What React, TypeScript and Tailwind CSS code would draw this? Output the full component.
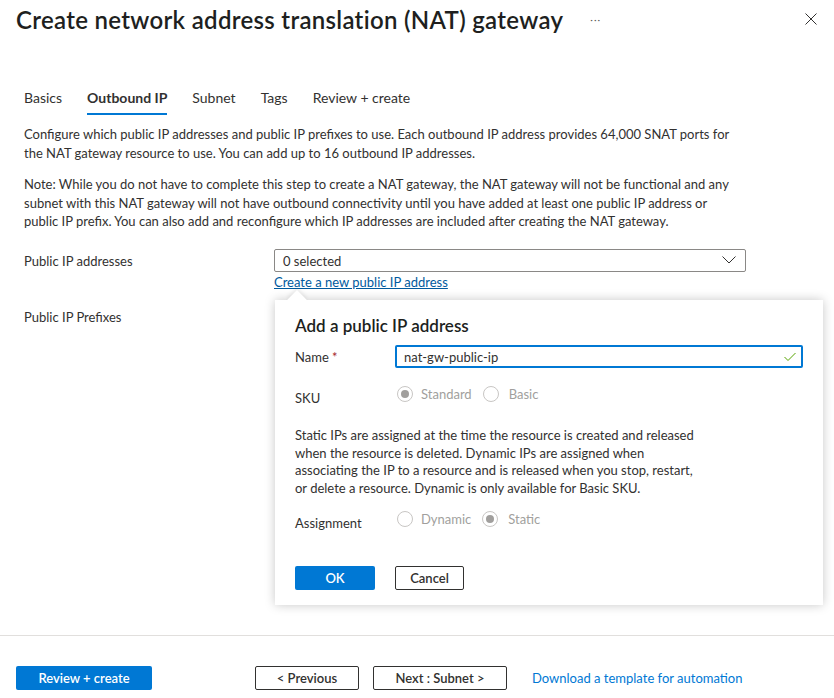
import React from "react";

const Radio = ({ checked }: { checked?: boolean }) => (
  <span className="w-[16px] h-[16px] rounded-full border border-[#c8c6c4] flex items-center justify-center bg-white">
    {checked && <span className="w-[8px] h-[8px] rounded-full bg-[#a19f9d]" />}
  </span>
);

export default function App() {
  return (
    <div className="w-[834px] h-[698px] bg-white relative flex flex-col font-['Lato','Liberation_Sans',sans-serif] text-[#323130] overflow-hidden">
      {/* Header */}
      <div className="flex items-center h-[40px] pl-4 pr-[16px]">
        <h1 className="text-[24px] font-semibold leading-[32px] text-[#201f1e] tracking-[0.3px]">
          Create network address translation (NAT) gateway
        </h1>
        <span className="ml-[27px] text-[10px] text-[#605e5c] tracking-[1px] mt-[-2px]">···</span>
        <div className="flex-1" />
        <svg width="12" height="12" viewBox="0 0 12 12" className="mr-[1px] mt-[-3px]">
          <path d="M0.5 0.5 L11.5 11.5 M11.5 0.5 L0.5 11.5" stroke="#323130" strokeWidth="1" />
        </svg>
      </div>

      {/* Tabs */}
      <div className="flex mt-[48px] pl-[11.5px] text-[14px] leading-[20px]">
        {["Basics", "Outbound IP", "Subnet", "Tags", "Review + create"].map((t) => (
          <div key={t} className="px-[12.5px] flex flex-col">
            <span className={t === "Outbound IP" ? "font-bold text-[#323130]" : "text-[#323130]"}>{t}</span>
            <span className={t === "Outbound IP" ? "h-[2px] mt-[5px] bg-[#0078d4]" : "h-[2px] mt-[5px]"} />
          </div>
        ))}
      </div>

      {/* Description */}
      <div className="px-6 mt-[10px] text-[13px] leading-[19px] whitespace-nowrap">
        <p>
          Configure which public IP addresses and public IP prefixes to use. Each outbound IP address provides 64,000 SNAT ports for
          <br />
          the NAT gateway resource to use. You can add up to 16 outbound IP addresses.
        </p>
        <p className="mt-[12px] leading-[18.5px]">
          Note: While you do not have to complete this step to create a NAT gateway, the NAT gateway will not be functional and any
          <br />
          subnet with this NAT gateway will not have outbound connectivity until you have added at least one public IP address or
          <br />
          public IP prefix. You can also add and reconfigure which IP addresses are included after creating the NAT gateway.
        </p>
      </div>

      {/* Form */}
      <div className="px-6 mt-[18px] text-[13px]">
        <div className="flex">
          <div className="w-[250px] pt-[3px] leading-[18px]">Public IP addresses</div>
          <div className="flex flex-col w-[472px]">
            <div className="h-[23px] border border-[#8a8886] rounded-[2px] flex items-center px-[8px] justify-between">
              <span className="leading-[18px] mt-[1px]">0 selected</span>
              <svg width="14" height="8" viewBox="0 0 14 8" className="mr-[1px]">
                <path d="M0.5 0.5 L7 7 L13.5 0.5" fill="none" stroke="#323130" strokeWidth="1" />
              </svg>
            </div>
            <a className="text-[#005a9e] underline leading-[18px] mt-[1px] w-fit">Create a new public IP address</a>
          </div>
        </div>
        <div className="mt-[17px] leading-[18px]">Public IP Prefixes</div>
      </div>

      <div className="flex-1" />

      {/* Footer */}
      <div className="border-t border-[#e1dfdd] h-[63px] flex items-start px-4 pt-[30px] text-[13px]">
        <button className="h-[24px] w-[136px] bg-[#0078d4] text-white font-semibold rounded-[2px] leading-[18px]">Review + create</button>
        <button className="ml-[103px] h-[24px] w-[104px] border border-[#323130] rounded-[2px] font-semibold leading-[18px]">&lt; Previous</button>
        <button className="ml-[14px] h-[24px] w-[134px] border border-[#323130] rounded-[2px] font-semibold leading-[18px]">Next : Subnet &gt;</button>
        <a className="ml-[25px] text-[#0078d4] leading-[24px]">Download a template for automation</a>
      </div>

      {/* Callout */}
      <div className="absolute left-[275px] top-[300px] w-[548px] h-[305px] bg-white shadow-[0_0_10px_rgba(0,0,0,0.22)] text-[13px]">
        <div className="absolute left-[15px] top-[-7px] w-[14px] h-[14px] bg-white rotate-45 shadow-[-2px_-2px_4px_rgba(0,0,0,0.08)]" />
        <div className="relative bg-white px-[20px] pt-[14px] h-full">
          <div className="text-[17px] font-semibold leading-[24px] text-[#201f1e]">Add a public IP address</div>
          <div className="flex items-center mt-[7px]">
            <div className="w-[100px] leading-[18px]">
              Name <span className="text-[#a4262c]">*</span>
            </div>
            <div className="flex-1 h-[23px] border-2 border-[#0078d4] rounded-[2px] flex items-center pl-[7px] pr-[5px] justify-between">
              <span className="leading-[18px]">nat-gw-public-ip</span>
              <svg width="12" height="10" viewBox="0 0 12 10">
                <path d="M0.5 5 L4 8.5 L11.5 1" fill="none" stroke="#57a300" strokeWidth="1" />
              </svg>
            </div>
          </div>
          <div className="flex items-center mt-[13px]">
            <div className="w-[102px] leading-[18px] pt-[8px]">SKU</div>
            <div className="flex items-center text-[#a19f9d]">
              <Radio checked />
              <span className="ml-[8px] leading-[18px]">Standard</span>
              <span className="ml-[11px]"><Radio /></span>
              <span className="ml-[10px] leading-[18px]">Basic</span>
            </div>
          </div>
          <p className="mt-[20px] leading-[17.5px] whitespace-nowrap">
            Static IPs are assigned at the time the resource is created and released
            <br />
            when the resource is deleted. Dynamic IPs are assigned when
            <br />
            associating the IP to a resource and is released when you stop, restart,
            <br />
            or delete a resource. Dynamic is only available for Basic SKU.
          </p>
          <div className="flex items-center mt-[9px]">
            <div className="w-[102px] leading-[18px] pt-[8px]">Assignment</div>
            <div className="flex items-center text-[#a19f9d]">
              <Radio />
              <span className="ml-[8px] leading-[18px]">Dynamic</span>
              <span className="ml-[11px]"><Radio checked /></span>
              <span className="ml-[10px] leading-[18px]">Static</span>
            </div>
          </div>
          <div className="flex mt-[34px]">
            <button className="h-[24px] w-[80px] bg-[#0078d4] text-white font-semibold rounded-[2px] leading-[18px]">OK</button>
            <button className="ml-[20px] h-[24px] w-[69px] border border-[#323130] rounded-[2px] font-semibold leading-[18px]">Cancel</button>
          </div>
        </div>
      </div>
    </div>
  );
}
